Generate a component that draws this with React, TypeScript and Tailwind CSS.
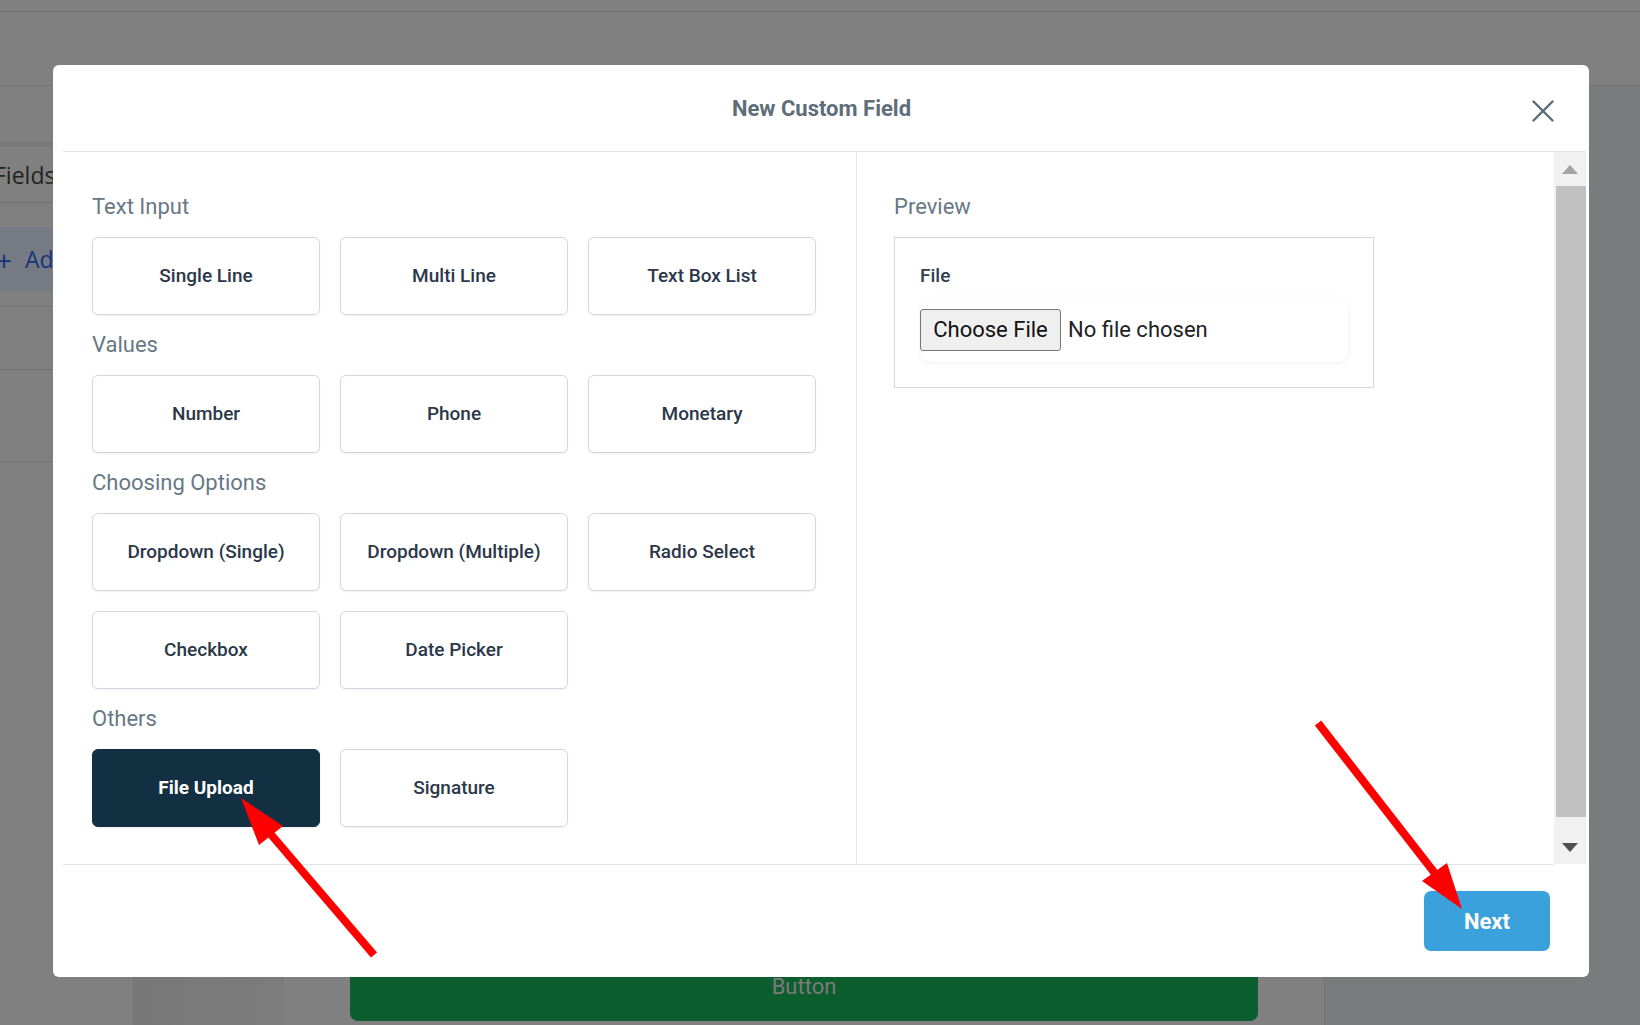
import React from "react";

const sections: { title: string; items: string[] }[] = [
  { title: "Text Input", items: ["Single Line", "Multi Line", "Text Box List"] },
  { title: "Values", items: ["Number", "Phone", "Monetary"] },
  {
    title: "Choosing Options",
    items: ["Dropdown (Single)", "Dropdown (Multiple)", "Radio Select", "Checkbox", "Date Picker"],
  },
  { title: "Others", items: ["File Upload", "Signature"] },
];

function Background() {
  return (
    <div className="flex flex-col h-full">
      <div className="h-[12px] border-b border-[#6f6f6f]" />
      <div className="h-[74px] border-b border-[#747474]" />
      <div className="flex flex-1 min-h-0">
        <div className="w-[133px] flex flex-col">
          <div className="h-[56px]" />
          <div className="h-[5px] bg-[#787878]" />
          <div className="h-[54px] flex items-center overflow-hidden">
            <span className="-ml-[6px] mt-[3px] text-[23px] text-[#232323] font-['Open_Sans',sans-serif] leading-none">
              Fields
            </span>
          </div>
          <div className="h-[3px] bg-[#797979]" />
          <div className="h-[23px]" />
          <div className="h-[65px] bg-[#767a83] flex items-center overflow-hidden text-[#17337e] font-['Open_Sans',sans-serif]">
            <span className="text-[28px] leading-none -ml-[4px]">+</span>
            <span className="ml-[13px] text-[23px] leading-none">Add</span>
          </div>
          <div className="h-[15px] border-b border-[#717171]" />
          <div className="h-[63px] border-b border-[#717171]" />
          <div className="h-[92px] border-b border-[#717171]" />
        </div>
        <div className="w-[151px] bg-gradient-to-r from-[#787878] to-[#7c7c7c]" />
        <div className="w-[1040px] flex flex-col justify-end px-[66px] pb-[4px]">
          <div className="h-[70px] bg-[#0d5e2f] rounded-b-[8px] flex items-center justify-center">
            <span className="text-[22px] text-[#7b7b7b] font-['Roboto',sans-serif]">Button</span>
          </div>
        </div>
        <div className="flex-1 bg-[#7a7b7d] border-l border-[#757575]" />
      </div>
    </div>
  );
}

function Card({ label, selected }: { label: string; selected?: boolean }) {
  return (
    <div
      className={
        selected
          ? "h-[78px] rounded-[6px] border border-[#132f42] bg-[#132f42] flex items-center justify-center text-[19px] font-bold text-white shadow-[0_1px_2px_rgba(0,0,0,0.08)]"
          : "h-[78px] rounded-[6px] border border-[#d3d6df] bg-white flex items-center justify-center text-[19px] font-medium text-[#2c3849] shadow-[0_1px_2px_rgba(0,0,0,0.06)]"
      }
    >
      {label}
    </div>
  );
}

function Modal() {
  return (
    <div className="absolute left-[53px] top-[65px] w-[1536px] h-[912px] bg-white rounded-[6px] pl-[10px] pr-[3px] flex flex-col font-['Roboto',sans-serif]">
      {/* header */}
      <div className="h-[87px] shrink-0 border-b border-[#e1e4e9] flex items-center justify-center relative">
        <span className="text-[22px] font-bold text-[#5e6e79] mt-[1px] -ml-[6px]">New Custom Field</span>
        <svg
          className="absolute right-[32px] top-[35px]"
          width="22"
          height="22"
          viewBox="0 0 22 22"
          fill="none"
          stroke="#5a6c78"
          strokeWidth="2.4"
          strokeLinecap="round"
        >
          <line x1="1.5" y1="1.5" x2="20.5" y2="20.5" />
          <line x1="20.5" y1="1.5" x2="1.5" y2="20.5" />
        </svg>
      </div>
      {/* body */}
      <div className="h-[712px] shrink-0 flex">
        <div className="w-[794px] border-r border-[#e3e6ea] pl-[29px] pt-[40px]">
          {sections.map((s, i) => (
            <div key={s.title} className={i === 0 ? "" : "mt-[15px]"}>
              <div className="h-[30px] leading-[30px] text-[22px] text-[#677886] mb-[15px]">{s.title}</div>
              <div className="grid grid-cols-[228px_228px_228px] gap-[20px]">
                {s.items.map((it) => (
                  <Card key={it} label={it} selected={it === "File Upload"} />
                ))}
              </div>
            </div>
          ))}
        </div>
        <div className="flex-1 pl-[37px] pt-[40px]">
          <div className="h-[30px] leading-[30px] text-[22px] text-[#677886] mb-[15px]">Preview</div>
          <div className="w-[480px] h-[151px] border border-[#d3d8e0] pl-[25px] pr-[25px] pt-[26px]">
            <div className="h-[24px] leading-[24px] text-[19px] font-medium text-[#34404f]">File</div>
            <div className="mt-[9px] h-[65px] rounded-[10px] bg-white shadow-[0_1px_4px_rgba(0,0,0,0.07)] flex items-center">
              <div className="w-[141px] h-[42px] bg-[#efefef] border border-[#767676] rounded-[3px] flex items-center justify-center text-[22px] text-[#111]">
                Choose File
              </div>
              <span className="ml-[7px] text-[22px] text-[#222]">No file chosen</span>
            </div>
          </div>
        </div>
        {/* scrollbar */}
        <div className="w-[32px] bg-[#f1f1f1] flex flex-col">
          <div className="h-[34px] flex items-center justify-center">
            <svg width="16" height="9" viewBox="0 0 16 9">
              <polygon points="8,0 16,9 0,9" fill="#a3a3a3" />
            </svg>
          </div>
          <div className="h-[631px] ml-[2px] bg-[#c1c1c1]" />
          <div className="flex-1 flex items-end">
            <div className="h-[34px] w-full flex items-center justify-center">
              <svg width="16" height="9" viewBox="0 0 16 9">
                <polygon points="0,0 16,0 8,9" fill="#505050" />
              </svg>
            </div>
          </div>
        </div>
      </div>
      {/* footer */}
      <div className="flex-1 mr-[32px] border-t border-[#e1e4e9] flex items-center justify-end pr-[4px]">
        <div className="w-[126px] h-[60px] rounded-[7px] bg-[#3aa1dc] flex items-center justify-center text-white text-[22px] font-bold">
          Next
        </div>
      </div>
    </div>
  );
}

function Arrows() {
  return (
    <svg className="absolute inset-0 pointer-events-none" width="1640" height="1025" viewBox="0 0 1640 1025">
      <line x1="374" y1="955" x2="268" y2="831" stroke="#ff0000" strokeWidth="8" />
      <polygon points="241,798 259,845 283,826" fill="#ff0000" />
      <line x1="1318" y1="723" x2="1437" y2="876" stroke="#ff0000" strokeWidth="8" />
      <polygon points="1462,909 1422,881 1447,863" fill="#ff0000" />
    </svg>
  );
}

export default function App() {
  return (
    <div className="relative w-[1640px] h-[1025px] overflow-hidden bg-[#808080]">
      <Background />
      <Modal />
      <Arrows />
    </div>
  );
}
